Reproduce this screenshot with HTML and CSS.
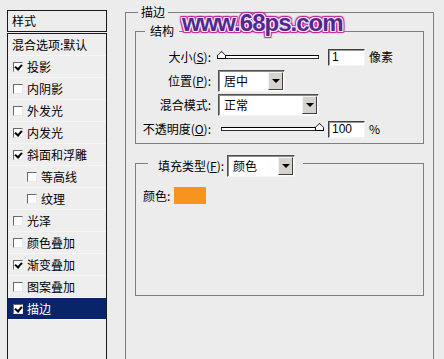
FILE: index.html
```html
<!DOCTYPE html>
<html lang="zh-CN">
<head>
<meta charset="utf-8">
<title>图层样式 - 描边</title>
<link rel="stylesheet" href="styles.css">
</head>
<body>
<div class="page">
  <aside class="side">
    <div class="side-head">样式</div>
    <ul class="side-list">
      <li class="row plain">混合选项:默认</li>
      <li class="row"><span class="cb on"></span>投影</li>
      <li class="row"><span class="cb"></span>内阴影</li>
      <li class="row"><span class="cb"></span>外发光</li>
      <li class="row"><span class="cb on"></span>内发光</li>
      <li class="row"><span class="cb on"></span>斜面和浮雕</li>
      <li class="row sub"><span class="cb"></span>等高线</li>
      <li class="row sub"><span class="cb"></span>纹理</li>
      <li class="row"><span class="cb"></span>光泽</li>
      <li class="row"><span class="cb"></span>颜色叠加</li>
      <li class="row"><span class="cb on"></span>渐变叠加</li>
      <li class="row"><span class="cb"></span>图案叠加</li>
      <li class="row sel"><span class="cb on"></span>描边</li>
    </ul>
  </aside>

  <main class="main">
    <fieldset class="grp outer">
      <legend class="lg lg-outer">描边</legend>

      <fieldset class="grp struct">
        <legend class="lg lg-struct">结构</legend>
        <div class="form">
          <span class="lbl">大小(<u>S</u>):</span>
          <div class="ctl">
            <div class="slider size-slider"><span class="thumb"></span></div>
            <div class="num">1</div>
            <span class="unit">像素</span>
          </div>

          <span class="lbl">位置(<u>P</u>):</span>
          <div class="ctl">
            <div class="select sel-pos"><span class="val">居中</span><span class="btn"></span></div>
          </div>

          <span class="lbl">混合模式:</span>
          <div class="ctl">
            <div class="select sel-mode"><span class="val">正常</span><span class="btn"></span></div>
          </div>

          <span class="lbl">不透明度(<u>O</u>):</span>
          <div class="ctl">
            <div class="slider op-slider"><span class="thumb"></span></div>
            <div class="num op-num">100</div>
            <span class="unit">%</span>
          </div>
        </div>
      </fieldset>

      <fieldset class="grp fill">
        <legend class="lg lg-fill">填充类型(<u>F</u>):<div class="select sel-fill"><span class="val">颜色</span><span class="btn"></span></div></legend>
        <div class="color-row">
          <span>颜色:</span>
          <span class="swatch"></span>
        </div>
      </fieldset>
    </fieldset>

    <div class="wm">www.68ps.com</div>
  </main>
</div>
</body>
</html>
```

FILE: styles.css
```css
* { box-sizing: border-box; }

html, body {
  margin: 0;
  padding: 0;
  background: #ececec;
}

body {
  font-family: "Noto Sans CJK SC", "Liberation Sans", sans-serif;
  font-size: 12px;
  line-height: 14px;
  color: #000;
}

u { text-decoration: underline; text-underline-offset: 1px; }

.page {
  display: flex;
  height: 359px;
  overflow: hidden;
}

/* ---------- left style list ---------- */
.side {
  margin: 10px 0 0 7px;
  width: 100px;
  display: flex;
  flex-direction: column;
  flex: none;
}

.side-head {
  height: 22px;
  border: 1px solid #1a1a1a;
  padding-left: 4px;
  display: flex;
  align-items: center;
  margin-bottom: 1px;
  background: #ededed;
}

.side-list {
  list-style: none;
  margin: 0;
  padding: 0;
  border: 1px solid #1a1a1a;
  border-bottom: none;
  flex: 1;
  background: #eeeeee;
}

.row {
  height: 22px;
  display: flex;
  align-items: center;
  padding-left: 5px;
  border-bottom: 1px solid #f6f6f6;
}

.row.plain { padding-left: 4px; }
.row.sub { padding-left: 19px; }

.row.sel {
  background: #0a246a;
  color: #fff;
  border-bottom-color: #f6f6f6;
}

.cb {
  width: 10px;
  height: 10px;
  margin-right: 4px;
  flex: none;
  background: #fff;
  border-style: solid;
  border-width: 1px;
  border-color: #6a6a6a #e8e8e8 #e8e8e8 #6a6a6a;
  position: relative;
}

.cb.on::after {
  content: "";
  position: absolute;
  left: 1px;
  top: 0px;
  width: 3px;
  height: 5px;
  border-right: 2px solid #000;
  border-bottom: 2px solid #000;
  transform: translate(1px, 0) rotate(40deg);
}

/* ---------- right panel ---------- */
.main {
  position: relative;
  margin-left: 18px;
  padding-top: 5px;
  width: 309px;
  flex: none;
}

.grp {
  margin: 0;
  min-width: 0;
  border: 1px solid #7e7e7e;
}

.lg {
  font-size: 12px;
  line-height: 14px;
}

.outer {
  padding: 5px 9px 0;
  height: 400px;
}

.lg-outer { margin-left: 3px; padding: 0 3px; }

.struct {
  padding: 7px 0 2px;
}

.lg-struct { margin-left: 9px; padding: 0 5px; }

.form {
  display: grid;
  grid-template-columns: 75px 1fr;
  grid-auto-rows: 24px;
  column-gap: 6px;
  align-items: center;
}

.lbl {
  text-align: right;
  white-space: nowrap;
}

.ctl {
  display: flex;
  align-items: center;
  height: 100%;
}

.slider {
  position: relative;
  height: 4px;
  background: #fff;
  border-top: 1px solid #000;
  border-bottom: 1px solid #2a2a2a;
  border-left: 1px solid #333;
  border-right: 1px solid #333;
}

.size-slider { width: 102px; }
.op-slider { width: 99px; margin-left: 4px; }

.thumb {
  position: absolute;
  top: -5px;
  width: 9px;
  height: 8px;
}
.size-slider .thumb { left: -1px; }
.op-slider .thumb { right: -5px; }

.thumb::before {
  content: "";
  position: absolute;
  inset: 0;
  background: #000;
  clip-path: polygon(50% 0, 100% 55%, 100% 100%, 0 100%, 0 55%);
}
.thumb::after {
  content: "";
  position: absolute;
  inset: 1px;
  background: #fff;
  clip-path: polygon(50% 0, 100% 55%, 100% 100%, 0 100%, 0 55%);
}

.num {
  width: 37px;
  height: 17px;
  margin-left: 9px;
  background: #fff;
  border-style: solid;
  border-width: 1px;
  border-color: #404040 #f4f4f4 #f4f4f4 #404040;
  box-shadow: inset 1px 1px 0 #9a9a9a;
  font-family: "Liberation Sans", sans-serif;
  font-size: 12px;
  line-height: 14px;
  padding-left: 3px;
}
.op-num { margin-left: 8px; }

.unit { margin-left: 4px; }

.select {
  display: flex;
  align-items: stretch;
  height: 22px;
  background: #fff;
  border-style: solid;
  border-width: 1px;
  border-color: #505050 #f4f4f4 #f4f4f4 #505050;
  box-shadow: inset 1px 1px 0 #8a8a8a;
}

.select .val {
  flex: 1;
  display: flex;
  align-items: center;
  padding-left: 5px;
}

.select .btn {
  width: 15px;
  margin: 1px 1px 1px 0;
  background: #d6d3ce;
  border-style: solid;
  border-width: 1px;
  border-color: #f4f4f4 #404040 #404040 #f4f4f4;
  display: flex;
  align-items: center;
  justify-content: center;
}
.select .btn::after {
  content: "";
  border-left: 4px solid transparent;
  border-right: 4px solid transparent;
  border-top: 4px solid #000;
}

.sel-pos { width: 67px; margin-left: 1px; }
.sel-mode { width: 101px; margin-left: 1px; }

.fill {
  margin-top: 5px;
  padding: 10px 7px 91px;
}

.lg-fill {
  margin-left: 5px;
  padding: 6px 8px 0 10px;
  display: flex;
  align-items: center;
}

.sel-fill { width: 68px; margin-left: 3px; }

.color-row {
  display: flex;
  align-items: center;
  height: 17px;
}

.swatch {
  width: 32px;
  height: 17px;
  margin-left: 4px;
  background: #f7941d;
}

/* watermark overlay */
.wm {
  position: absolute;
  left: 57px;
  top: 9px;
  font-family: "Liberation Sans", sans-serif;
  font-weight: bold;
  font-size: 24px;
  line-height: 28px;
  letter-spacing: -1px;
  color: #55278e;
  text-shadow:
    1px 0 0 #f4e8ff, -1px 0 0 #f4e8ff, 0 1px 0 #f4e8ff, 0 -1px 0 #f4e8ff,
    1px 1px 0 #f4e8ff, -1px -1px 0 #f4e8ff, 1px -1px 0 #f4e8ff, -1px 1px 0 #f4e8ff,
    2px 0 1px #c0279a, -2px 0 1px #c0279a, 0 2px 1px #c0279a, 0 -2px 1px #c0279a,
    2px 2px 1px #c0279a, -2px -2px 1px #c0279a, 2px -2px 1px #c0279a, -2px 2px 1px #c0279a;
  pointer-events: none;
}
```
